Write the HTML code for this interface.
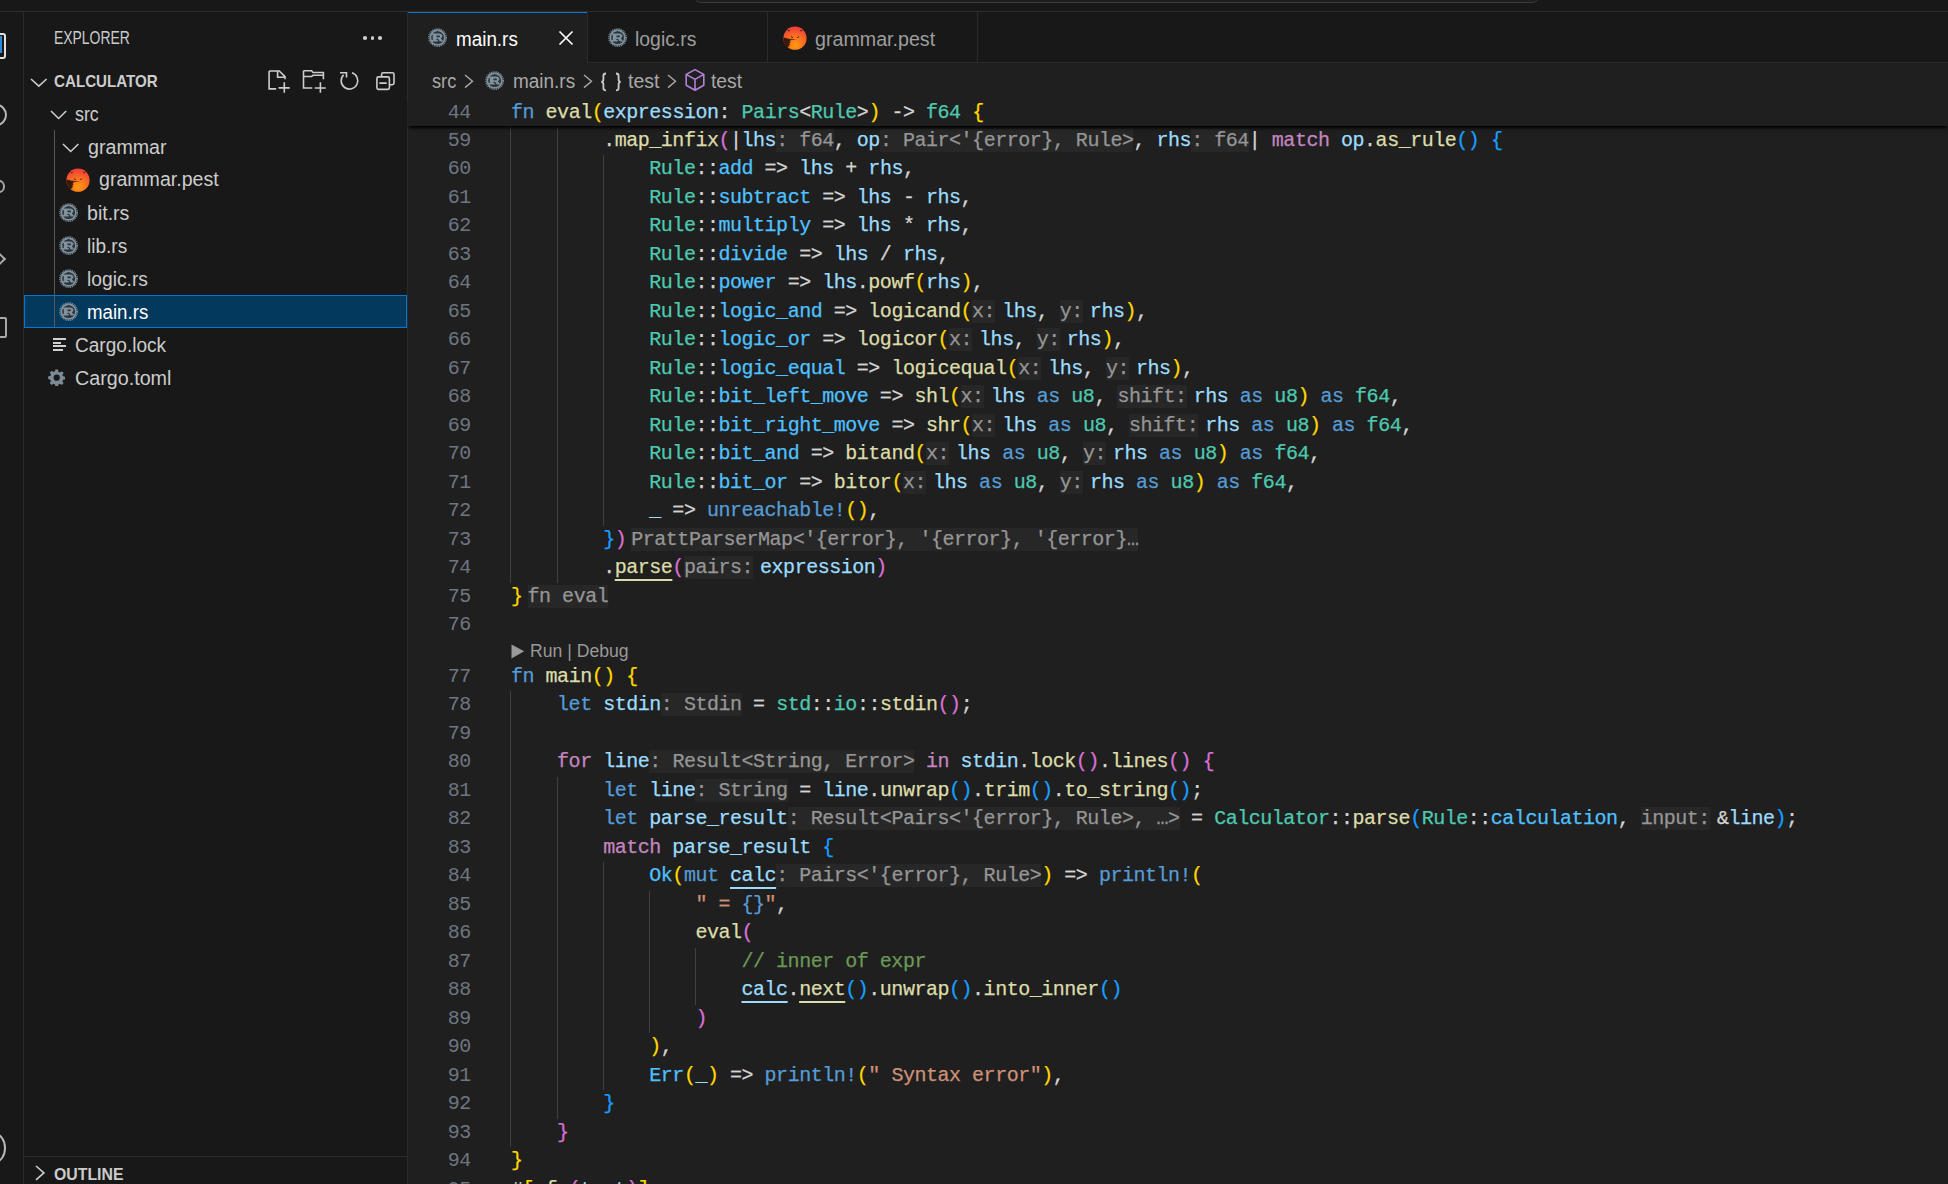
<!DOCTYPE html>
<html><head><meta charset="utf-8">
<style>
html,body{margin:0;padding:0;width:1948px;height:1184px;overflow:hidden;background:#181818;}
body{position:relative;font-family:"Liberation Sans",sans-serif;}
.abs{position:absolute;}
.hl{position:absolute;background:#2b2b2b;}
#editor{position:absolute;left:408px;top:63px;width:1540px;height:1121px;background:#1f1f1f;overflow:hidden;}
.ln{position:absolute;left:408px;width:62.8px;text-align:right;font-family:"Liberation Mono",monospace;font-size:20px;letter-spacing:-0.475px;line-height:28.5px;color:#6e7681;white-space:pre;}
.cl{position:absolute;font-family:"Liberation Mono",monospace;font-size:20px;letter-spacing:-0.475px;line-height:28.5px;color:#d4d4d4;-webkit-text-stroke:0.25px currentColor;white-space:pre;}
.ig{position:absolute;width:1px;background:#404040;}
.kw{color:#569cd6}.ctrl{color:#c586c0}.fn{color:#dcdcaa}.ty{color:#4ec9b0}.var{color:#9cdcfe}.em{color:#4fc1ff}
.p{color:#d4d4d4}.s{color:#ce9178}.cm{color:#6a9955}.b1{color:#ffd700}.b2{color:#da70d6}.b3{color:#179fff}.mac{color:#569cd6}.ph{color:#569cd6}
.u{text-decoration:underline;text-underline-offset:6px;text-decoration-thickness:2px;}
.h{color:#969696;background:#272727;}
.hp{color:#969696;background:#272727;margin-right:7px;}
.hm{color:#969696;background:#272727;margin-left:5px;}
.ui{position:absolute;white-space:pre;transform-origin:0 0;}
.side{font-size:19.5px;color:#cccccc;}
.tab{position:absolute;top:12px;height:51px;}
</style></head><body>
<svg width="0" height="0" style="position:absolute">
<defs>
<radialGradient id="pestg" cx="0.5" cy="0.8" r="0.8">
<stop offset="0" stop-color="#ff9a0e"/><stop offset="0.55" stop-color="#f86a24"/><stop offset="1" stop-color="#ef3b3b"/>
</radialGradient>
<symbol id="rust" viewBox="0 0 20 20">
<circle cx="10" cy="10" r="9.2" fill="none" stroke="#7f929e" stroke-width="1.3" stroke-dasharray="1.05 0.9"/>
<circle cx="10" cy="10" r="8.6" fill="#7f929e"/>
<circle cx="10" cy="10" r="6.7" fill="#2c3339"/>
<path d="M3.6 5.6h7.8c2.3 0 3.6 1.2 3.6 2.8c0 1.1-.7 1.9-1.6 2.2l2.6 3.4H12.4l-2-2.9H8.8v1.4h1.4v1.6H3.6v-1.6h1.4V7.2H3.6z" fill="#7f929e"/>
<rect x="8.8" y="7.7" width="3.6" height="1.9" rx="0.5" fill="#2c3339"/>
<circle cx="10" cy="3.6" r="0.8" fill="#2c3339"/>
</symbol>
<symbol id="pest" viewBox="0 0 24 24">
<circle cx="12" cy="12.2" r="11.6" fill="url(#pestg)"/>
<path d="M4.6 1.8l1.2 3.4l1.6-1.6z M19.4 1.8l-1.2 3.4l-1.6-1.6z" fill="#e8452f"/>
<circle cx="5.9" cy="4.6" r="0.8" fill="#3a1a10"/><circle cx="18.1" cy="4.6" r="0.8" fill="#3a1a10"/>
<path d="M8 10.6l2 1.2 M16 10.6l-2 1.2" stroke="#5a2410" stroke-width="1"/>
<path d="M0.5 11.4c2.4.8 6.4 1.6 13.2 1.8c-2.6.4-5 .6-7 .5l1.4 1.1-1.6.7 1.3 1-1.6.7 1.1 1.3-1.4.5.9 1.3c-1.1.2-2 .4-2.7 1.1C1.4 18.4.3 14.8.5 11.4z" fill="#2a1208" opacity="0.92"/>
</symbol>
<symbol id="gear" viewBox="0 0 18 18">
<g fill="#7b8a94">
<path d="M7.6 0.6h2.8l.4 2.2 1.5.7 1.9-1.3 2 2-1.3 1.9.7 1.5 2.2.4v2.8l-2.2.4-.7 1.5 1.3 1.9-2 2-1.9-1.3-1.5.7-.4 2.2H7.6l-.4-2.2-1.5-.7-1.9 1.3-2-2 1.3-1.9-.7-1.5L.2 10.4V7.6l2.2-.4.7-1.5L1.8 3.8l2-2 1.9 1.3 1.5-.7z"/>
</g>
<circle cx="9" cy="9" r="3.2" fill="#181818"/>
</symbol>
</defs></svg>
<!-- title bar remnant -->
<div class="abs" style="left:693px;top:-20px;width:845px;height:21px;border:1px solid #3a3a3a;border-radius:8px;background:#1f1f1f;"></div>
<div class="hl" style="left:0;top:11px;width:1948px;height:1px;"></div>
<!-- activity bar -->
<div class="hl" style="left:23px;top:12px;width:1px;height:1172px;"></div>
<div class="abs" style="left:-20px;top:33px;width:22px;height:22px;border:2px solid #e0e0e0;border-radius:3px;"></div>
<div class="abs" style="left:-18px;top:36px;width:19.5px;height:17px;background:#2b88d8"></div>
<div class="abs" style="left:-14px;top:103.5px;width:17px;height:18px;border:2px solid #b8b8b8;border-radius:50%"></div>
<div class="abs" style="left:-6px;top:180px;width:7px;height:9px;border:2px solid #a8a8a8;border-radius:50%"></div>
<div class="abs" style="left:-6px;top:254px;width:8px;height:8px;border-top:2px solid #a8a8a8;border-right:2px solid #a8a8a8;transform:rotate(45deg)"></div>
<div class="abs" style="left:-12px;top:317px;width:15px;height:17px;border:2px solid #a8a8a8;border-radius:2px"></div>
<div class="abs" style="left:-16px;top:1133px;width:18px;height:26px;border:2px solid #b8b8b8;border-radius:50%"></div>
<!-- sidebar -->
<div class="hl" style="left:407px;top:12px;width:1px;height:1172px;"></div>
<div class="hl" style="left:24px;top:1156px;width:383px;height:1px;"></div>
<svg class="abs" style="left:29.2px;top:76.5px" width="19.599999999999998" height="11.200000000000003" viewBox="0 0 19.599999999999998 11.200000000000003"><polyline points="2,2 9.799999999999999,9.200000000000003 17.599999999999998,2" fill="none" stroke="#cccccc" stroke-width="1.6"/></svg>
<svg class="abs" style="left:48.9px;top:109px" width="19.199999999999996" height="11.5" viewBox="0 0 19.199999999999996 11.5"><polyline points="2,2 9.599999999999998,9.5 17.199999999999996,2" fill="none" stroke="#cccccc" stroke-width="1.6"/></svg>
<svg class="abs" style="left:60.8px;top:142px" width="19.400000000000006" height="11.5" viewBox="0 0 19.400000000000006 11.5"><polyline points="2,2 9.700000000000003,9.5 17.400000000000006,2" fill="none" stroke="#cccccc" stroke-width="1.6"/></svg>
<div class="abs" style="left:24px;top:295px;width:383px;height:33px;box-sizing:border-box;background:#04395e;border:1px solid #0078d4"></div>
<div class="abs" style="left:54px;top:130px;width:1px;height:198px;background:#585858"></div>
<svg class="abs" style="left:65.5px;top:168px" width="24" height="24"><use href="#pest" width="24" height="24"/></svg>
<svg class="abs" style="left:58.8px;top:203.2px" width="19.2" height="19.2"><use href="#rust" width="19.2" height="19.2"/></svg>
<svg class="abs" style="left:58.8px;top:236.2px" width="19.2" height="19.2"><use href="#rust" width="19.2" height="19.2"/></svg>
<svg class="abs" style="left:58.8px;top:269.2px" width="19.2" height="19.2"><use href="#rust" width="19.2" height="19.2"/></svg>
<svg class="abs" style="left:58.8px;top:302.2px" width="19.2" height="19.2"><use href="#rust" width="19.2" height="19.2"/></svg>
<div class="abs" style="left:53px;top:337.9px;width:13.2px;height:2px;background:#d0d0d0"></div>
<div class="abs" style="left:53px;top:341.6px;width:7.6px;height:2px;background:#d0d0d0"></div>
<div class="abs" style="left:53px;top:345.2px;width:13.2px;height:2px;background:#d0d0d0"></div>
<div class="abs" style="left:53px;top:349.0px;width:10.2px;height:2px;background:#d0d0d0"></div>
<svg class="abs" style="left:47.7px;top:368.9px" width="17.4" height="17.4"><use href="#gear" width="17.4" height="17.4"/></svg>
<svg class="abs" style="left:255px;top:60px" width="150" height="40" viewBox="0 0 150 40"><path d="M14.1 11V28.9H21.2 M14.1 11H24.3L30 16.6V19.3 M22.6 11V17.2H30 M29.3 22.3V32.8 M23.6 27.9H34.7" fill="none" stroke="#cccccc" stroke-width="1.6"/><path d="M48.5 10.8V28H57.3 M48.5 10.8H56.6L58 12.5H68.4V19.3 M48.5 16.5H56.6L58 15.3H68.4 M65.4 22.3V32.8 M59.7 28H70.8" fill="none" stroke="#cccccc" stroke-width="1.6"/><path d="M88.6 14.9A8.3 8.3 0 1 0 96.93 12.86" fill="none" stroke="#cccccc" stroke-width="1.6"/><path d="M85 12.7H91.5V17.6" fill="none" stroke="#cccccc" stroke-width="1.6"/><rect x="121.9" y="16.9" width="12.5" height="12.5" rx="1.6" fill="none" stroke="#cccccc" stroke-width="1.6"/><path d="M126.6 16.9V14.3C126.6 13.4 127.3 12.7 128.2 12.7H137.4C138.3 12.7 139 13.4 139 14.3V23.1C139 24 138.3 24.7 137.4 24.7H134.4 M124.3 23.1H131.7" fill="none" stroke="#cccccc" stroke-width="1.6"/></svg>
<div class="abs" style="left:363.2px;top:36.3px;width:3.6px;height:3.6px;border-radius:50%;background:#cccccc"></div>
<div class="abs" style="left:370.7px;top:36.3px;width:3.6px;height:3.6px;border-radius:50%;background:#cccccc"></div>
<div class="abs" style="left:378.2px;top:36.3px;width:3.6px;height:3.6px;border-radius:50%;background:#cccccc"></div>
<svg class="abs" style="left:33.6px;top:1164.2px" width="11.899999999999999" height="17.799999999999955" viewBox="0 0 11.899999999999999 17.799999999999955"><polyline points="2,2 9.899999999999999,8.899999999999977 2,15.799999999999955" fill="none" stroke="#cccccc" stroke-width="1.6"/></svg>
<!-- editor -->
<div id="editor"></div>
<div class="abs" style="left:588px;top:62px;width:1360px;height:1px;background:#2b2b2b"></div>
<div class="abs" style="left:408px;top:12px;width:179.5px;height:51px;background:#1f1f1f"></div>
<div class="abs" style="left:408px;top:11.8px;width:179.5px;height:1.6px;background:#0078d4"></div>
<div class="abs" style="left:587.2px;top:12px;width:1px;height:51px;background:#2b2b2b"></div>
<div class="abs" style="left:767.2px;top:12px;width:1px;height:51px;background:#2b2b2b"></div>
<div class="abs" style="left:977.2px;top:12px;width:1px;height:51px;background:#2b2b2b"></div>
<svg class="abs" style="left:428px;top:28px" width="19.2" height="19.2"><use href="#rust" width="19.2" height="19.2"/></svg>
<svg class="abs" style="left:608px;top:28px" width="19.2" height="19.2"><use href="#rust" width="19.2" height="19.2"/></svg>
<svg class="abs" style="left:782.5px;top:26px" width="24" height="24"><use href="#pest" width="24" height="24"/></svg>
<svg class="abs" style="left:558px;top:30px" width="16" height="16" viewBox="0 0 16 16"><path d="M1.5 1.5L14.5 14.5M14.5 1.5L1.5 14.5" stroke="#ffffff" stroke-width="1.7"/></svg>
<svg class="abs" style="left:463.2px;top:72.9px" width="11.5" height="16.599999999999994" viewBox="0 0 11.5 16.599999999999994"><polyline points="2,2 9.5,8.299999999999997 2,14.599999999999994" fill="none" stroke="#a9a9a9" stroke-width="1.4"/></svg>
<svg class="abs" style="left:581.9000000000001px;top:72.9px" width="11.5" height="16.599999999999994" viewBox="0 0 11.5 16.599999999999994"><polyline points="2,2 9.5,8.299999999999997 2,14.599999999999994" fill="none" stroke="#a9a9a9" stroke-width="1.4"/></svg>
<svg class="abs" style="left:665.7px;top:72.9px" width="11.5" height="16.599999999999994" viewBox="0 0 11.5 16.599999999999994"><polyline points="2,2 9.5,8.299999999999997 2,14.599999999999994" fill="none" stroke="#a9a9a9" stroke-width="1.4"/></svg>
<svg class="abs" style="left:485px;top:70.6px" width="19.2" height="19.2"><use href="#rust" width="19.2" height="19.2"/></svg>
<svg class="abs" style="left:600px;top:72px" width="22" height="20" viewBox="0 0 22 20"><path d="M6 1.5c-2 0-2.6.8-2.6 2.4v3.6c0 1.3-.7 2.2-2 2.4c1.3.2 2 1.1 2 2.4v3.6c0 1.6.6 2.4 2.6 2.4 M16 1.5c2 0 2.6.8 2.6 2.4v3.6c0 1.3.7 2.2 2 2.4c-1.3.2-2 1.1-2 2.4v3.6c0 1.6-.6 2.4-2.6 2.4" fill="none" stroke="#cccccc" stroke-width="1.8"/></svg>
<svg class="abs" style="left:684px;top:68px" width="22" height="24" viewBox="0 0 22 24"><path d="M11 1.6L2.2 6.4v10.8L11 22.2l8.8-5V6.4z M2.2 6.4L11 11.4l8.8-5 M11 11.4v10.8" fill="none" stroke="#b180d7" stroke-width="1.6" stroke-linejoin="round"/></svg>
<div class="ig" style="left:510.40px;top:126.00px;height:456.50px"></div>
<div class="ig" style="left:556.50px;top:126.50px;height:456.00px"></div>
<div class="ig" style="left:602.60px;top:155.00px;height:370.50px"></div>
<div class="ig" style="left:510.40px;top:691.40px;height:456.00px"></div>
<div class="ig" style="left:556.50px;top:776.90px;height:342.00px"></div>
<div class="ig" style="left:602.60px;top:862.40px;height:228.00px"></div>
<div class="ig" style="left:648.70px;top:890.90px;height:142.50px"></div>
<div class="ig" style="left:694.80px;top:947.90px;height:57.00px"></div>
<div class="ln" style="top:126.50px">59</div>
<div class="cl" style="top:126.50px;left:603.20px"><span class="p">.</span><span class="fn">map_infix</span><span class="b2">(</span><span class="p">|</span><span class="var">lhs</span><span class="h">: f64</span><span class="p">, </span><span class="var">op</span><span class="h">: Pair&lt;'{error}, Rule&gt;</span><span class="p">, </span><span class="var">rhs</span><span class="h">: f64</span><span class="p">|</span> <span class="ctrl">match</span> <span class="var">op</span><span class="p">.</span><span class="fn">as_rule</span><span class="b3">()</span> <span class="b3">{</span></div>
<div class="ln" style="top:155.00px">60</div>
<div class="cl" style="top:155.00px;left:649.30px"><span class="ty">Rule</span><span class="p">::</span><span class="em">add</span><span class="p"> =&gt; </span><span class="var">lhs</span><span class="p"> + </span><span class="var">rhs</span><span class="p">,</span></div>
<div class="ln" style="top:183.50px">61</div>
<div class="cl" style="top:183.50px;left:649.30px"><span class="ty">Rule</span><span class="p">::</span><span class="em">subtract</span><span class="p"> =&gt; </span><span class="var">lhs</span><span class="p"> - </span><span class="var">rhs</span><span class="p">,</span></div>
<div class="ln" style="top:212.00px">62</div>
<div class="cl" style="top:212.00px;left:649.30px"><span class="ty">Rule</span><span class="p">::</span><span class="em">multiply</span><span class="p"> =&gt; </span><span class="var">lhs</span><span class="p"> * </span><span class="var">rhs</span><span class="p">,</span></div>
<div class="ln" style="top:240.50px">63</div>
<div class="cl" style="top:240.50px;left:649.30px"><span class="ty">Rule</span><span class="p">::</span><span class="em">divide</span><span class="p"> =&gt; </span><span class="var">lhs</span><span class="p"> / </span><span class="var">rhs</span><span class="p">,</span></div>
<div class="ln" style="top:269.00px">64</div>
<div class="cl" style="top:269.00px;left:649.30px"><span class="ty">Rule</span><span class="p">::</span><span class="em">power</span><span class="p"> =&gt; </span><span class="var">lhs</span><span class="p">.</span><span class="fn">powf</span><span class="b1">(</span><span class="var">rhs</span><span class="b1">)</span><span class="p">,</span></div>
<div class="ln" style="top:297.50px">65</div>
<div class="cl" style="top:297.50px;left:649.30px"><span class="ty">Rule</span><span class="p">::</span><span class="em">logic_and</span><span class="p"> =&gt; </span><span class="fn">logicand</span><span class="b1">(</span><span class="hp">x:</span><span class="var">lhs</span><span class="p">, </span><span class="hp">y:</span><span class="var">rhs</span><span class="b1">)</span><span class="p">,</span></div>
<div class="ln" style="top:326.00px">66</div>
<div class="cl" style="top:326.00px;left:649.30px"><span class="ty">Rule</span><span class="p">::</span><span class="em">logic_or</span><span class="p"> =&gt; </span><span class="fn">logicor</span><span class="b1">(</span><span class="hp">x:</span><span class="var">lhs</span><span class="p">, </span><span class="hp">y:</span><span class="var">rhs</span><span class="b1">)</span><span class="p">,</span></div>
<div class="ln" style="top:354.50px">67</div>
<div class="cl" style="top:354.50px;left:649.30px"><span class="ty">Rule</span><span class="p">::</span><span class="em">logic_equal</span><span class="p"> =&gt; </span><span class="fn">logicequal</span><span class="b1">(</span><span class="hp">x:</span><span class="var">lhs</span><span class="p">, </span><span class="hp">y:</span><span class="var">rhs</span><span class="b1">)</span><span class="p">,</span></div>
<div class="ln" style="top:383.00px">68</div>
<div class="cl" style="top:383.00px;left:649.30px"><span class="ty">Rule</span><span class="p">::</span><span class="em">bit_left_move</span><span class="p"> =&gt; </span><span class="fn">shl</span><span class="b1">(</span><span class="hp">x:</span><span class="var">lhs</span> <span class="kw">as</span> <span class="ty">u8</span><span class="p">, </span><span class="hp">shift:</span><span class="var">rhs</span> <span class="kw">as</span> <span class="ty">u8</span><span class="b1">)</span> <span class="kw">as</span> <span class="ty">f64</span><span class="p">,</span></div>
<div class="ln" style="top:411.50px">69</div>
<div class="cl" style="top:411.50px;left:649.30px"><span class="ty">Rule</span><span class="p">::</span><span class="em">bit_right_move</span><span class="p"> =&gt; </span><span class="fn">shr</span><span class="b1">(</span><span class="hp">x:</span><span class="var">lhs</span> <span class="kw">as</span> <span class="ty">u8</span><span class="p">, </span><span class="hp">shift:</span><span class="var">rhs</span> <span class="kw">as</span> <span class="ty">u8</span><span class="b1">)</span> <span class="kw">as</span> <span class="ty">f64</span><span class="p">,</span></div>
<div class="ln" style="top:440.00px">70</div>
<div class="cl" style="top:440.00px;left:649.30px"><span class="ty">Rule</span><span class="p">::</span><span class="em">bit_and</span><span class="p"> =&gt; </span><span class="fn">bitand</span><span class="b1">(</span><span class="hp">x:</span><span class="var">lhs</span> <span class="kw">as</span> <span class="ty">u8</span><span class="p">, </span><span class="hp">y:</span><span class="var">rhs</span> <span class="kw">as</span> <span class="ty">u8</span><span class="b1">)</span> <span class="kw">as</span> <span class="ty">f64</span><span class="p">,</span></div>
<div class="ln" style="top:468.50px">71</div>
<div class="cl" style="top:468.50px;left:649.30px"><span class="ty">Rule</span><span class="p">::</span><span class="em">bit_or</span><span class="p"> =&gt; </span><span class="fn">bitor</span><span class="b1">(</span><span class="hp">x:</span><span class="var">lhs</span> <span class="kw">as</span> <span class="ty">u8</span><span class="p">, </span><span class="hp">y:</span><span class="var">rhs</span> <span class="kw">as</span> <span class="ty">u8</span><span class="b1">)</span> <span class="kw">as</span> <span class="ty">f64</span><span class="p">,</span></div>
<div class="ln" style="top:497.00px">72</div>
<div class="cl" style="top:497.00px;left:649.30px"><span class="var">_</span><span class="p"> =&gt; </span><span class="mac">unreachable!</span><span class="b1">()</span><span class="p">,</span></div>
<div class="ln" style="top:525.50px">73</div>
<div class="cl" style="top:525.50px;left:603.20px"><span class="b3">}</span><span class="b2">)</span><span class="hm">PrattParserMap&lt;'{error}, '{error}, '{error}…</span></div>
<div class="ln" style="top:554.00px">74</div>
<div class="cl" style="top:554.00px;left:603.20px"><span class="p">.</span><span class="fn u">parse</span><span class="b2">(</span><span class="hp">pairs:</span><span class="var">expression</span><span class="b2">)</span></div>
<div class="ln" style="top:582.50px">75</div>
<div class="cl" style="top:582.50px;left:511.00px"><span class="b1">}</span><span class="hm">fn eval</span></div>
<div class="ln" style="top:611.00px">76</div>
<div class="ln" style="top:662.90px">77</div>
<div class="cl" style="top:662.90px;left:511.00px"><span class="kw">fn</span> <span class="fn">main</span><span class="b1">()</span> <span class="b1">{</span></div>
<div class="ln" style="top:691.40px">78</div>
<div class="cl" style="top:691.40px;left:557.10px"><span class="kw">let</span> <span class="var">stdin</span><span class="h">: Stdin</span><span class="p"> = </span><span class="ty">std</span><span class="p">::</span><span class="ty">io</span><span class="p">::</span><span class="fn">stdin</span><span class="b2">()</span><span class="p">;</span></div>
<div class="ln" style="top:719.90px">79</div>
<div class="ln" style="top:748.40px">80</div>
<div class="cl" style="top:748.40px;left:557.10px"><span class="ctrl">for</span> <span class="var">line</span><span class="h">: Result&lt;String, Error&gt;</span> <span class="ctrl">in</span> <span class="var">stdin</span><span class="p">.</span><span class="fn">lock</span><span class="b2">()</span><span class="p">.</span><span class="fn">lines</span><span class="b2">()</span> <span class="b2">{</span></div>
<div class="ln" style="top:776.90px">81</div>
<div class="cl" style="top:776.90px;left:603.20px"><span class="kw">let</span> <span class="var">line</span><span class="h">: String</span><span class="p"> = </span><span class="var">line</span><span class="p">.</span><span class="fn">unwrap</span><span class="b3">()</span><span class="p">.</span><span class="fn">trim</span><span class="b3">()</span><span class="p">.</span><span class="fn">to_string</span><span class="b3">()</span><span class="p">;</span></div>
<div class="ln" style="top:805.40px">82</div>
<div class="cl" style="top:805.40px;left:603.20px"><span class="kw">let</span> <span class="var">parse_result</span><span class="h">: Result&lt;Pairs&lt;'{error}, Rule&gt;, …&gt;</span><span class="p"> = </span><span class="ty">Calculator</span><span class="p">::</span><span class="fn">parse</span><span class="b3">(</span><span class="ty">Rule</span><span class="p">::</span><span class="em">calculation</span><span class="p">, </span><span class="hp">input:</span><span class="p">&amp;</span><span class="var">line</span><span class="b3">)</span><span class="p">;</span></div>
<div class="ln" style="top:833.90px">83</div>
<div class="cl" style="top:833.90px;left:603.20px"><span class="ctrl">match</span> <span class="var">parse_result</span> <span class="b3">{</span></div>
<div class="ln" style="top:862.40px">84</div>
<div class="cl" style="top:862.40px;left:649.30px"><span class="em">Ok</span><span class="b1">(</span><span class="kw">mut</span> <span class="var u">calc</span><span class="h">: Pairs&lt;'{error}, Rule&gt;</span><span class="b1">)</span><span class="p"> =&gt; </span><span class="mac">println!</span><span class="b1">(</span></div>
<div class="ln" style="top:890.90px">85</div>
<div class="cl" style="top:890.90px;left:695.40px"><span class="s">" = </span><span class="ph">{}</span><span class="s">"</span><span class="p">,</span></div>
<div class="ln" style="top:919.40px">86</div>
<div class="cl" style="top:919.40px;left:695.40px"><span class="fn">eval</span><span class="b2">(</span></div>
<div class="ln" style="top:947.90px">87</div>
<div class="cl" style="top:947.90px;left:741.50px"><span class="cm">// inner of expr</span></div>
<div class="ln" style="top:976.40px">88</div>
<div class="cl" style="top:976.40px;left:741.50px"><span class="var u">calc</span><span class="p">.</span><span class="fn u">next</span><span class="b3">()</span><span class="p">.</span><span class="fn">unwrap</span><span class="b3">()</span><span class="p">.</span><span class="fn">into_inner</span><span class="b3">()</span></div>
<div class="ln" style="top:1004.90px">89</div>
<div class="cl" style="top:1004.90px;left:695.40px"><span class="b2">)</span></div>
<div class="ln" style="top:1033.40px">90</div>
<div class="cl" style="top:1033.40px;left:649.30px"><span class="b1">)</span><span class="p">,</span></div>
<div class="ln" style="top:1061.90px">91</div>
<div class="cl" style="top:1061.90px;left:649.30px"><span class="em">Err</span><span class="b1">(</span><span class="var">_</span><span class="b1">)</span><span class="p"> =&gt; </span><span class="mac">println!</span><span class="b1">(</span><span class="s">" Syntax error"</span><span class="b1">)</span><span class="p">,</span></div>
<div class="ln" style="top:1090.40px">92</div>
<div class="cl" style="top:1090.40px;left:603.20px"><span class="b3">}</span></div>
<div class="ln" style="top:1118.90px">93</div>
<div class="cl" style="top:1118.90px;left:557.10px"><span class="b2">}</span></div>
<div class="ln" style="top:1147.40px">94</div>
<div class="cl" style="top:1147.40px;left:511.00px"><span class="b1">}</span></div>
<div class="ln" style="top:1175.90px">95</div>
<div class="cl" style="top:1175.90px;left:511.00px"><span class="p">#</span><span class="b1">[</span><span class="fn">cfg</span><span class="b2">(</span><span class="var">test</span><span class="b2">)</span><span class="b1">]</span></div>
<svg class="abs" style="left:510.5px;top:643.5px" width="14" height="15"><path d="M0.5 0.5L13.2 7.3L0.5 14.5z" fill="#999999"/></svg>
<div class="ui" style="left:53.64px;top:29.06px;font-size:17.5px;line-height:19.55px;font-weight:400;color:#cccccc;transform:scaleX(0.7958)">EXPLORER</div>
<div class="ui" style="left:54.22px;top:71.61px;font-size:17px;line-height:18.99px;font-weight:700;color:#cccccc;transform:scaleX(0.8911)">CALCULATOR</div>
<div class="ui" style="left:75.22px;top:103.00px;font-size:20px;line-height:22.34px;font-weight:400;color:#cccccc;transform:scaleX(0.8920)">src</div>
<div class="ui" style="left:87.56px;top:136.00px;font-size:20px;line-height:22.34px;font-weight:400;color:#cccccc;transform:scaleX(0.9819)">grammar</div>
<div class="ui" style="left:99.22px;top:168.40px;font-size:20px;line-height:22.34px;font-weight:400;color:#cccccc;transform:scaleX(0.9787)">grammar.pest</div>
<div class="ui" style="left:86.98px;top:202.20px;font-size:20px;line-height:22.34px;font-weight:400;color:#cccccc;transform:scaleX(0.9781)">bit.rs</div>
<div class="ui" style="left:86.52px;top:234.60px;font-size:20px;line-height:22.34px;font-weight:400;color:#cccccc;transform:scaleX(0.9511)">lib.rs</div>
<div class="ui" style="left:86.52px;top:267.50px;font-size:20px;line-height:22.34px;font-weight:400;color:#cccccc;transform:scaleX(0.9618)">logic.rs</div>
<div class="ui" style="left:86.52px;top:300.50px;font-size:20px;line-height:22.34px;font-weight:400;color:#ffffff;transform:scaleX(0.9342)">main.rs</div>
<div class="ui" style="left:74.76px;top:333.90px;font-size:20px;line-height:22.34px;font-weight:400;color:#cccccc;transform:scaleX(0.9531)">Cargo.lock</div>
<div class="ui" style="left:74.76px;top:366.60px;font-size:20px;line-height:22.34px;font-weight:400;color:#cccccc;transform:scaleX(0.9857)">Cargo.toml</div>
<div class="ui" style="left:54.10px;top:1164.85px;font-size:17.4px;line-height:19.44px;font-weight:700;color:#cccccc;transform:scaleX(0.9098)">OUTLINE</div>
<div class="ui" style="left:455.98px;top:27.60px;font-size:20px;line-height:22.34px;font-weight:400;color:#ffffff;transform:scaleX(0.9426)">main.rs</div>
<div class="ui" style="left:635.08px;top:27.60px;font-size:20px;line-height:22.34px;font-weight:400;color:#9d9d9d;transform:scaleX(0.9707)">logic.rs</div>
<div class="ui" style="left:814.86px;top:27.60px;font-size:20px;line-height:22.34px;font-weight:400;color:#9d9d9d;transform:scaleX(0.9827)">grammar.pest</div>
<div class="ui" style="left:431.88px;top:69.70px;font-size:20px;line-height:22.34px;font-weight:400;color:#a9a9a9;transform:scaleX(0.9097)">src</div>
<div class="ui" style="left:512.76px;top:69.70px;font-size:20px;line-height:22.34px;font-weight:400;color:#a9a9a9;transform:scaleX(0.9478)">main.rs</div>
<div class="ui" style="left:627.78px;top:69.70px;font-size:20px;line-height:22.34px;font-weight:400;color:#a9a9a9;transform:scaleX(0.9789)">test</div>
<div class="ui" style="left:711.10px;top:69.70px;font-size:20px;line-height:22.34px;font-weight:400;color:#a9a9a9;transform:scaleX(0.9647)">test</div>
<div class="ui" style="left:530.08px;top:640.61px;font-size:18px;line-height:20.11px;font-weight:400;color:#999999;transform:scaleX(0.9790)">Run | Debug</div>
<!-- sticky -->
<div class="abs" style="left:408px;top:97.5px;width:1540px;height:28.5px;background:#1f1f1f;box-shadow:0 3px 3px -1px #000;"></div>
<div class="ln" style="top:98.6px">44</div>
<div class="cl" style="top:98.6px;left:511px"><span class="kw">fn</span> <span class="fn">eval</span><span class="b1">(</span><span class="var">expression</span><span class="p">: </span><span class="ty">Pairs</span><span class="p">&lt;</span><span class="ty">Rule</span><span class="p">&gt;</span><span class="b1">)</span><span class="p"> -&gt; </span><span class="ty">f64</span> <span class="b1">{</span></div>
</body></html>
